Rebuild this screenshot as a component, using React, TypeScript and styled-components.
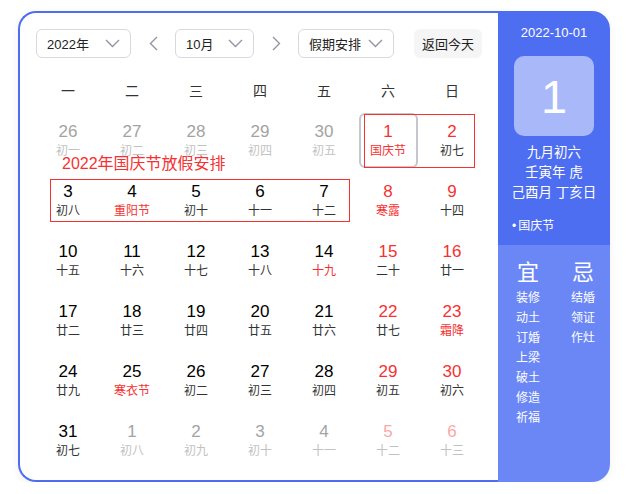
import React from 'react';
import styled, {createGlobalStyle} from 'styled-components';

const GlobalStyle = createGlobalStyle`
  body {
    margin: 0;
    background: #fff;
    font-family: "Liberation Sans", "Noto Sans CJK SC", sans-serif;
  }
`;

const blue = '#4e6ef2';
const red = '#f73131';

type Day = {
  num: number;
  lunar: string;
  faded?: boolean;
  weekend?: boolean;
  redLunar?: boolean;
  selected?: boolean;
};

const weekNames = ['一', '二', '三', '四', '五', '六', '日'];

const days: Day[] = [
  {num: 26, lunar: '初一', faded: true},
  {num: 27, lunar: '初二', faded: true},
  {num: 28, lunar: '初三', faded: true},
  {num: 29, lunar: '初四', faded: true},
  {num: 30, lunar: '初五', faded: true},
  {num: 1, lunar: '国庆节', weekend: true, redLunar: true, selected: true},
  {num: 2, lunar: '初七', weekend: true},
  {num: 3, lunar: '初八'},
  {num: 4, lunar: '重阳节', redLunar: true},
  {num: 5, lunar: '初十'},
  {num: 6, lunar: '十一'},
  {num: 7, lunar: '十二'},
  {num: 8, lunar: '寒露', weekend: true, redLunar: true},
  {num: 9, lunar: '十四', weekend: true},
  {num: 10, lunar: '十五'},
  {num: 11, lunar: '十六'},
  {num: 12, lunar: '十七'},
  {num: 13, lunar: '十八'},
  {num: 14, lunar: '十九', redLunar: true},
  {num: 15, lunar: '二十', weekend: true},
  {num: 16, lunar: '廿一', weekend: true},
  {num: 17, lunar: '廿二'},
  {num: 18, lunar: '廿三'},
  {num: 19, lunar: '廿四'},
  {num: 20, lunar: '廿五'},
  {num: 21, lunar: '廿六'},
  {num: 22, lunar: '廿七', weekend: true},
  {num: 23, lunar: '霜降', weekend: true, redLunar: true},
  {num: 24, lunar: '廿九'},
  {num: 25, lunar: '寒衣节', redLunar: true},
  {num: 26, lunar: '初二'},
  {num: 27, lunar: '初三'},
  {num: 28, lunar: '初四'},
  {num: 29, lunar: '初五', weekend: true},
  {num: 30, lunar: '初六', weekend: true},
  {num: 31, lunar: '初七'},
  {num: 1, lunar: '初八', faded: true},
  {num: 2, lunar: '初九', faded: true},
  {num: 3, lunar: '初十', faded: true},
  {num: 4, lunar: '十一', faded: true},
  {num: 5, lunar: '十二', faded: true, weekend: true},
  {num: 6, lunar: '十三', faded: true, weekend: true},
];

const goodThings = ['装修', '动土', '订婚', '上梁', '破土', '修造', '祈福'];
const badThings = ['结婚', '领证', '作灶'];

const ChevronDown = () => (
  <svg width="15" height="9" viewBox="0 0 15 9" fill="none">
    <polyline points="1,1 7.5,7.5 14,1" stroke="#9195a3" strokeWidth="1.4"/>
  </svg>
);

const Arrow = ({dir}: {dir: 'left' | 'right'}) => (
  <svg width="9" height="15" viewBox="0 0 9 15" fill="none">
    <polyline
      points={dir === 'left' ? '8,1 1.5,7.5 8,14' : '1,1 7.5,7.5 1,14'}
      stroke="#9195a3"
      strokeWidth="1.4"
    />
  </svg>
);

export default function App() {
  return (
    <>
      <GlobalStyle/>
      <Page>
        <Card>
          <Main>
            <Toolbar>
              <Select $width={95}>
                <span>2022年</span>
                <ChevronDown/>
              </Select>
              <ArrowButton><Arrow dir="left"/></ArrowButton>
              <Select $width={79}>
                <span>10月</span>
                <ChevronDown/>
              </Select>
              <ArrowButton><Arrow dir="right"/></ArrowButton>
              <Select $width={96}>
                <span>假期安排</span>
                <ChevronDown/>
              </Select>
              <TodayButton>返回今天</TodayButton>
            </Toolbar>
            <WeekHeader>
              {weekNames.map(name => <WeekName key={name}>{name}</WeekName>)}
            </WeekHeader>
            <Grid>
              {days.map((day, i) => (
                <Cell key={i} $selected={!!day.selected}>
                  <DayNum $faded={!!day.faded} $weekend={!!day.weekend}>{day.num}</DayNum>
                  <Lunar $faded={!!day.faded} $red={!!day.redLunar}>{day.lunar}</Lunar>
                </Cell>
              ))}
              <HolidayBox style={{left: 328, top: 1, width: 111, height: 54}}/>
              <HolidayBox style={{left: 14, top: 66, width: 300, height: 43}}/>
              <HolidayLabel>2022年国庆节放假安排</HolidayLabel>
            </Grid>
          </Main>
          <Side>
            <SideTop>
              <DateText>2022-10-01</DateText>
              <BigDay>1</BigDay>
              <LunarInfo>
                <div>九月初六</div>
                <div>壬寅年 虎</div>
                <div>己酉月 丁亥日</div>
              </LunarInfo>
              <Festival>国庆节</Festival>
            </SideTop>
            <SideBottom>
              <AdviceColumn>
                <AdviceTitle>宜</AdviceTitle>
                {goodThings.map(t => <AdviceItem key={t}>{t}</AdviceItem>)}
              </AdviceColumn>
              <AdviceColumn>
                <AdviceTitle>忌</AdviceTitle>
                {badThings.map(t => <AdviceItem key={t}>{t}</AdviceItem>)}
              </AdviceColumn>
            </SideBottom>
          </Side>
        </Card>
      </Page>
    </>
  );
}

const Page = styled.div`
  padding: 11px 0 0 18px;
`;

const Card = styled.div`
  display: flex;
  width: 592px;
  height: 471px;
  border-radius: 18px;
  box-shadow: 0 2px 8px rgba(0, 0, 0, 0.06);
`;

const Main = styled.div`
  box-sizing: border-box;
  width: 480px;
  height: 100%;
  padding: 16px 14px 0 16px;
  border: 2px solid ${blue};
  border-right: none;
  border-radius: 18px 0 0 18px;
  background: #fff;
`;

const Toolbar = styled.div`
  display: flex;
  align-items: center;
  height: 29px;
`;

const Select = styled.div<{$width: number}>`
  box-sizing: border-box;
  display: flex;
  align-items: center;
  justify-content: space-between;
  width: ${p => p.$width}px;
  height: 29px;
  padding: 0 10px 0 10px;
  border: 1px solid #d7d9e0;
  border-radius: 6px;
  font-size: 13px;
  color: #222;
`;

const ArrowButton = styled.div`
  display: flex;
  align-items: center;
  justify-content: center;
  width: 44px;
  height: 29px;
`;

const TodayButton = styled.div`
  display: flex;
  align-items: center;
  justify-content: center;
  width: 68px;
  height: 29px;
  margin-left: 20px;
  border-radius: 6px;
  background: #f5f5f6;
  font-size: 13px;
  color: #222;
`;

const WeekHeader = styled.div`
  display: grid;
  grid-template-columns: repeat(7, 64px);
  height: 24px;
  margin-top: 20px;
`;

const WeekName = styled.div`
  display: flex;
  align-items: center;
  justify-content: center;
  font-size: 14px;
  color: #333;
`;

const Grid = styled.div`
  position: relative;
  display: grid;
  grid-template-columns: repeat(7, 64px);
  grid-auto-rows: 55px;
  row-gap: 5px;
  margin-top: 11px;
`;

const Cell = styled.div<{$selected: boolean}>`
  box-sizing: border-box;
  justify-self: center;
  display: flex;
  flex-direction: column;
  align-items: center;
  width: 59px;
  height: 55px;
  padding-top: 8px;
  border: 2px solid ${p => p.$selected ? '#c4c7ce' : 'transparent'};
  border-radius: 6px;
`;

const DayNum = styled.div<{$faded: boolean; $weekend: boolean}>`
  margin-top: -2px;
  font-size: 17px;
  line-height: 22px;
  color: ${p => p.$faded ? (p.$weekend ? '#f9a8a8' : '#a3a3a3') : (p.$weekend ? red : '#000')};
`;

const Lunar = styled.div<{$faded: boolean; $red: boolean}>`
  font-size: 12px;
  line-height: 16px;
  color: ${p => p.$faded ? '#c2c2c2' : (p.$red ? red : '#333')};
`;

const HolidayBox = styled.div`
  position: absolute;
  box-sizing: border-box;
  border: 1px solid ${red};
  pointer-events: none;
`;

const HolidayLabel = styled.div`
  position: absolute;
  left: 26px;
  top: 41px;
  font-size: 16px;
  line-height: 20px;
  color: ${red};
  white-space: nowrap;
`;

const Side = styled.div`
  display: flex;
  flex-direction: column;
  width: 112px;
  height: 100%;
  border-radius: 0 18px 18px 0;
  overflow: hidden;
  color: #fff;
`;

const SideTop = styled.div`
  display: flex;
  flex-direction: column;
  align-items: center;
  height: 234px;
  padding-top: 14px;
  box-sizing: border-box;
  background: ${blue};
`;

const DateText = styled.div`
  font-size: 13px;
  line-height: 16px;
`;

const BigDay = styled.div`
  display: flex;
  align-items: center;
  justify-content: center;
  width: 80px;
  height: 80px;
  margin-top: 15px;
  border-radius: 10px;
  background: #a9b8f8;
  font-size: 47px;
  font-weight: 300;
`;

const LunarInfo = styled.div`
  margin-top: 7px;
  text-align: center;
  font-size: 13.5px;
  line-height: 20px;
`;

const Festival = styled.div`
  align-self: flex-start;
  margin: 15px 0 0 14px;
  font-size: 12px;
  line-height: 16px;

  &::before {
    content: '•';
    margin-right: 2px;
  }
`;

const SideBottom = styled.div`
  display: flex;
  flex: 1;
  gap: 31px;
  padding: 14px 0 0 18px;
  background: #6b87f5;
`;

const AdviceColumn = styled.div`
  display: flex;
  flex-direction: column;
  align-items: center;
  width: 24px;
`;

const AdviceTitle = styled.div`
  font-size: 22px;
  line-height: 28px;
  margin-bottom: 1px;
`;

const AdviceItem = styled.div`
  font-size: 12px;
  line-height: 20px;
  white-space: nowrap;
`;
